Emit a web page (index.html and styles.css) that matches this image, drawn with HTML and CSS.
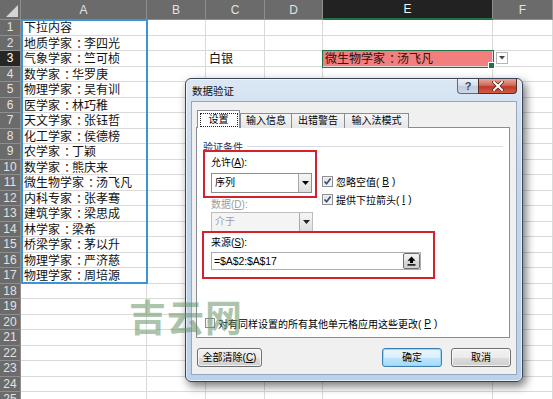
FILE: index.html
```html
<!DOCTYPE html>
<html lang="zh-CN">
<head>
<meta charset="utf-8">
<title>数据验证</title>
<link rel="stylesheet" href="styles.css">
</head>
<body>
<div class="sheet">
  <div class="ch corner"></div><div class="ch">A</div><div class="ch">B</div><div class="ch">C</div><div class="ch">D</div><div class="ch sel">E</div><div class="ch">F</div>
  <div class="rh">1</div><div class="c">下拉内容</div><div class="c"></div><div class="c"></div><div class="c"></div><div class="c"></div><div class="c"></div>
  <div class="rh">2</div><div class="c">地质学家<span class="p">：</span>李四光</div><div class="c"></div><div class="c"></div><div class="c"></div><div class="c"></div><div class="c"></div>
  <div class="rh sel">3</div><div class="c">气象学家<span class="p">：</span>竺可桢</div><div class="c"></div><div class="c">白银</div><div class="c"></div><div class="c active">微生物学家<span class="p">：</span>汤飞凡</div><div class="c"></div>
  <div class="rh">4</div><div class="c">数学家<span class="p">：</span>华罗庚</div><div class="c"></div><div class="c"></div><div class="c"></div><div class="c"></div><div class="c"></div>
  <div class="rh">5</div><div class="c">物理学家<span class="p">：</span>吴有训</div><div class="c"></div><div class="c"></div><div class="c"></div><div class="c"></div><div class="c"></div>
  <div class="rh">6</div><div class="c">医学家<span class="p">：</span>林巧稚</div><div class="c"></div><div class="c"></div><div class="c"></div><div class="c"></div><div class="c"></div>
  <div class="rh">7</div><div class="c">天文学家<span class="p">：</span>张钰哲</div><div class="c"></div><div class="c"></div><div class="c"></div><div class="c"></div><div class="c"></div>
  <div class="rh">8</div><div class="c">化工学家<span class="p">：</span>侯德榜</div><div class="c"></div><div class="c"></div><div class="c"></div><div class="c"></div><div class="c"></div>
  <div class="rh">9</div><div class="c">农学家<span class="p">：</span>丁颖</div><div class="c"></div><div class="c"></div><div class="c"></div><div class="c"></div><div class="c"></div>
  <div class="rh">10</div><div class="c">数学家<span class="p">：</span>熊庆来</div><div class="c"></div><div class="c"></div><div class="c"></div><div class="c"></div><div class="c"></div>
  <div class="rh">11</div><div class="c">微生物学家<span class="p">：</span>汤飞凡</div><div class="c"></div><div class="c"></div><div class="c"></div><div class="c"></div><div class="c"></div>
  <div class="rh">12</div><div class="c">内科专家<span class="p">：</span>张孝骞</div><div class="c"></div><div class="c"></div><div class="c"></div><div class="c"></div><div class="c"></div>
  <div class="rh">13</div><div class="c">建筑学家<span class="p">：</span>梁思成</div><div class="c"></div><div class="c"></div><div class="c"></div><div class="c"></div><div class="c"></div>
  <div class="rh">14</div><div class="c">林学家<span class="p">：</span>梁希</div><div class="c"></div><div class="c"></div><div class="c"></div><div class="c"></div><div class="c"></div>
  <div class="rh">15</div><div class="c">桥梁学家<span class="p">：</span>茅以升</div><div class="c"></div><div class="c"></div><div class="c"></div><div class="c"></div><div class="c"></div>
  <div class="rh">16</div><div class="c">物理学家<span class="p">：</span>严济慈</div><div class="c"></div><div class="c"></div><div class="c"></div><div class="c"></div><div class="c"></div>
  <div class="rh">17</div><div class="c">物理学家<span class="p">：</span>周培源</div><div class="c"></div><div class="c"></div><div class="c"></div><div class="c"></div><div class="c"></div>
  <div class="rh">18</div><div class="c"></div><div class="c"></div><div class="c"></div><div class="c"></div><div class="c"></div><div class="c"></div>
  <div class="rh">19</div><div class="c"></div><div class="c"></div><div class="c"></div><div class="c"></div><div class="c"></div><div class="c"></div>
  <div class="rh">20</div><div class="c"></div><div class="c"></div><div class="c"></div><div class="c"></div><div class="c"></div><div class="c"></div>
  <div class="rh">21</div><div class="c"></div><div class="c"></div><div class="c"></div><div class="c"></div><div class="c"></div><div class="c"></div>
  <div class="rh">22</div><div class="c"></div><div class="c"></div><div class="c"></div><div class="c"></div><div class="c"></div><div class="c"></div>
  <div class="rh">23</div><div class="c"></div><div class="c"></div><div class="c"></div><div class="c"></div><div class="c"></div><div class="c"></div>
  <div class="rh">24</div><div class="c"></div><div class="c"></div><div class="c"></div><div class="c"></div><div class="c"></div><div class="c"></div>
  <div class="rh">25</div><div class="c"></div><div class="c"></div><div class="c"></div><div class="c"></div><div class="c"></div><div class="c"></div>
</div>

<div class="range-sel"></div>
<div class="cell-drop"><svg width="6" height="4" viewBox="0 0 6 4"><polygon points="0,0 6,0 3,3.5" fill="#444"/></svg></div>

<div class="dialog">
  <div class="titlebar">
    <span class="title">数据验证</span>
    <div class="caption-btns">
      <div class="cap-help">?</div>
      <div class="cap-close">
        <svg width="12" height="10" viewBox="0 0 12 10">
          <path d="M2 1 L10 9 M10 1 L2 9" stroke="#5a1a14" stroke-width="3.4" stroke-linecap="square"/>
          <path d="M2 1 L10 9 M10 1 L2 9" stroke="#fff" stroke-width="2" stroke-linecap="square"/>
        </svg>
      </div>
    </div>
  </div>
  <div class="client">
    <div class="tabs">
      <div class="tab active"><span class="focus">设置</span></div>
      <div class="tab t2">输入信息</div>
      <div class="tab t3">出错警告</div>
      <div class="tab t4">输入法模式</div>
    </div>
    <div class="pane">
      <div class="group-title"><span>验证条件</span><i class="rule"></i></div>
      <div class="cond">
        <div class="cond-left">
          <div class="redbox box1">
            <div class="lbl">允许(<u>A</u>):</div>
            <div class="combo"><span class="combo-text">序列</span><span class="drop"><svg width="7" height="4" viewBox="0 0 7 4"><polygon points="0,0 7,0 3.5,4" fill="#000"/></svg></span></div>
          </div>
          <div class="lbl dis indent">数据(<u>D</u>):</div>
          <div class="combo disabled indent"><span class="combo-text">介于</span><span class="drop"><svg width="7" height="4" viewBox="0 0 7 4"><polygon points="0,0 7,0 3.5,4" fill="#222"/></svg></span></div>
        </div>
        <div class="checks">
          <div class="chk"><span class="box"><svg width="9" height="9" viewBox="0 0 9 9"><path d="M1.5 4.5 L3.6 6.8 L7.6 1.6" stroke="#3b4d78" stroke-width="1.7" fill="none"/></svg></span>忽略空值(<u>B</u>)</div>
          <div class="chk"><span class="box"><svg width="9" height="9" viewBox="0 0 9 9"><path d="M1.5 4.5 L3.6 6.8 L7.6 1.6" stroke="#3b4d78" stroke-width="1.7" fill="none"/></svg></span>提供下拉箭头(<u>I</u>)</div>
        </div>
      </div>
      <div class="redbox box2">
        <div class="lbl">来源(<u>S</u>):</div>
        <div class="input">
          <span class="input-text">=$A$2:$A$17</span>
          <span class="refbtn"><svg width="9" height="10" viewBox="0 0 9 10"><polygon points="4.5,0.5 8.5,4.8 6,4.8 6,7 3,7 3,4.8 0.5,4.8" fill="#000"/><rect x="0.5" y="8.2" width="8" height="1.4" fill="#000"/></svg></span>
        </div>
      </div>
      <div class="chk apply"><span class="box"></span>对有同样设置的所有其他单元格应用这些更改(<u>P</u>)</div>
    </div>
    <div class="buttons">
      <div class="btn clear">全部清除(<u>C</u>)</div>
      <div class="btn default">确定</div>
      <div class="btn">取消</div>
    </div>
  </div>
</div>

<div class="watermark">吉云网</div>
</body>
</html>
```

FILE: styles.css
```css
* { box-sizing: border-box; margin: 0; padding: 0; }
html, body { width: 553px; height: 399px; overflow: hidden; background: #fff; }
body {
  position: relative;
  font-family: "Noto Sans CJK SC", "Liberation Sans", sans-serif;
  color: #000;
}

/* ---------- spreadsheet ---------- */
.sheet {
  display: grid;
  grid-template-columns: 21px 126px 59px 59px 58px 170px 1fr;
  grid-template-rows: 20px;
  grid-auto-rows: 15.5px;
  font-size: 12px;
}
.ch, .rh {
  background: #6b6b6b;
  color: #e2e2e2;
  font-family: "Liberation Sans", sans-serif;
  font-size: 12px;
  display: flex;
  align-items: center;
  justify-content: center;
  border-right: 1px solid #8e8e8e;
  border-bottom: 1px solid #8e8e8e;
}
.ch.sel { background: #222; color: #f4f4f4; border-bottom: 2px solid #217346; }
.rh.sel { background: #262626; color: #fff; }
.corner { position: relative; }
.corner::after {
  content: "";
  position: absolute;
  right: 2px; bottom: 2px;
  width: 12px; height: 12px;
  background: #d4d4d4;
  clip-path: polygon(100% 0, 100% 100%, 0 100%);
}
.c {
  border-right: 1px solid #dadada;
  border-bottom: 1px solid #dadada;
  padding-left: 3px;
  line-height: 14.5px;
  white-space: nowrap;
  color: #111;
  min-width: 0;
}
/* full-width colon drawn centred in its 1em cell, as in the reference */
.p {
  padding-left: 4px;
  letter-spacing: -4px;
}
.c.active {
  position: relative;
  background: #f37e7e;
  padding-left: 2px;
  outline: 1px solid #217346;
  color: #2a1010;
}
.c.active::after {
  content: "";
  position: absolute;
  right: -3px; bottom: -3px;
  width: 5px; height: 5px;
  background: #217346;
  border: 1px solid #fff;
}
.range-sel {
  position: absolute;
  left: 21px; top: 19px;
  width: 127px; height: 265px;
  border: 2px solid #3b94d6;
}
.cell-drop {
  position: absolute;
  left: 496px; top: 52px;
  width: 12px; height: 12px;
  background: #fff;
  border: 1px solid #b5b5b5;
  display: flex;
  align-items: center;
  justify-content: center;
}

/* ---------- dialog ---------- */
.dialog {
  position: absolute;
  left: 185px; top: 78px;
  width: 338px; height: 304px;
  border: 1px solid #3a4656;
  border-radius: 6px;
  padding: 0 5px 6px 5px;
  background: linear-gradient(#dbe7f4, #c4d7ec 30%, #bcd2ea);
  box-shadow: 3px 4px 10px rgba(0, 0, 0, 0.55), inset 0 0 0 1px rgba(255,255,255,0.6);
  display: flex;
  flex-direction: column;
  font-family: "Liberation Sans", "Noto Sans CJK SC", sans-serif;
  font-size: 10px;
}
.titlebar {
  height: 22px;
  display: flex;
  align-items: center;
  padding-left: 1px;
}
.title { font-size: 10.5px; color: #111; }
.caption-btns {
  margin-left: auto;
  align-self: flex-start;
  display: flex;
  height: 15px;
}
.cap-help {
  width: 21px;
  border: 1px solid #5d6a7c;
  border-top: none;
  border-right: none;
  border-radius: 0 0 0 4px;
  background: linear-gradient(#edf2f8, #d3dce8 50%, #c1cddc 51%, #cdd8e6);
  color: #3b4a5e;
  font-family: "Liberation Sans", sans-serif;
  font-weight: bold;
  font-size: 11px;
  line-height: 14px;
  text-align: center;
}
.cap-close {
  width: 39px;
  border: 1px solid #5a2a24;
  border-top: none;
  border-radius: 0 0 4px 0;
  background: linear-gradient(#e8a89c, #d0695a 45%, #bf3b2b 55%, #d45a40);
  display: flex;
  align-items: center;
  justify-content: center;
}
.client {
  flex: 1;
  background: #f0f0f0;
  border: 1px solid #95a8c0;
  padding: 8px 6px 7px 4px;
  display: flex;
  flex-direction: column;
}

/* tabs */
.tabs {
  display: flex;
  align-items: flex-end;
  height: 18px;
  padding-left: 1px;
  position: relative;
  z-index: 1;
  margin-bottom: -1px;
}
.tab {
  height: 15px;
  border: 1px solid #898c95;
  border-bottom: none;
  background: linear-gradient(#f5f5f5, #e6e6e6);
  display: flex;
  align-items: center;
  justify-content: center;
  margin-left: -1px;
  line-height: 12px;
}
.tab.active {
  height: 18px;
  width: 43px;
  margin-left: 0;
  background: #fff;
  z-index: 2;
}
.tab.t2 { width: 52px; margin-left: 0; }
.tab.t3 { width: 54px; }
.tab.t4 { width: 65px; }
.focus {
  width: 38px;
  height: 14px;
  border: 1px dotted #222;
  display: flex;
  align-items: center;
  justify-content: center;
}

.pane {
  height: 211px;
  background: #fff;
  border: 1px solid #898c95;
  display: flex;
  flex-direction: column;
  padding-bottom: 7px;
}
.group-title {
  display: flex;
  align-items: center;
  gap: 4px;
  margin: 11px 6px 0 6px;
  height: 14px;
  color: #1a2f5a;
}
.rule { flex: 1; height: 1px; background: #d8dde3; }

.cond {
  display: flex;
  margin-top: -3px;
  margin-left: 6px;
}
.cond-left { width: 114px; display: flex; flex-direction: column; }
.redbox {
  border: 2px solid #d3222b;
  display: flex;
  flex-direction: column;
  position: relative;
}
.box1 { width: 114px; height: 48px; padding: 4px 3px 3px 6px; gap: 3px; }
.lbl { line-height: 14px; height: 14px; }
.lbl.dis { color: #9c9c9c; height: 13px; line-height: 13px; }
.indent { margin-left: 8px; }
.combo {
  height: 20px;
  border: 1px solid #8f8f8f;
  background: #fff;
  display: flex;
  align-items: stretch;
}
.box1 .combo { width: 101px; }
.combo.disabled {
  width: 102px;
  margin-top: 1px;
  background: #f4f4f4;
  border-color: #bdbdbd;
  color: #9d9d9d;
}
.combo-text { flex: 1; padding-left: 3px; line-height: 18px; }
.drop {
  width: 13px;
  border-left: 1px solid #a9a9a9;
  background: linear-gradient(#f6f6f6, #dedede);
  display: flex;
  align-items: center;
  justify-content: center;
}
.checks {
  margin-top: 22px;
  margin-left: 5px;
  display: flex;
  flex-direction: column;
}
.chk {
  height: 18px;
  display: flex;
  align-items: center;
  gap: 3px;
  white-space: nowrap;
}
.box {
  width: 11px;
  height: 11px;
  border: 1px solid #8e8f8f;
  background: linear-gradient(135deg, #dcdcdc, #fbfbfb);
  box-shadow: inset 0 0 0 1px #f4f4f4;
  display: flex;
  align-items: center;
  justify-content: center;
}
.box2 {
  width: 233px;
  height: 48px;
  margin-top: -1px;
  margin-left: 5px;
  padding: 3px 12px 7px 7px;
  gap: 2px;
}
.input {
  height: 18px;
  border: 1px solid #abadb3;
  background: #fff;
  display: flex;
  align-items: center;
  padding: 0 0 0 2px;
}
.input-text {
  flex: 1;
  font-family: "Liberation Sans", sans-serif;
  font-size: 10.5px;
  letter-spacing: -0.1px;
}
.refbtn {
  width: 17px;
  height: 16px;
  border: 1px solid #707070;
  border-radius: 2px;
  background: linear-gradient(#f3f3f3, #e6e6e6 50%, #d8d8d8 51%, #d2d2d2);
  display: flex;
  align-items: center;
  justify-content: center;
}
.apply {
  height: 14px;
  margin-top: 37px;
  margin-left: 8px;
  gap: 3px;
}
.apply .box { width: 10px; height: 10px; }

/* buttons */
.buttons {
  display: flex;
  gap: 9px;
  margin-top: 10px;
  margin-right: -1px;
  margin-left: 1px;
  height: 19px;
}
.btn {
  width: 60px;
  height: 19px;
  border: 1px solid #707070;
  border-radius: 3px;
  background: linear-gradient(#f2f2f2, #ebebeb 50%, #dddddd 51%, #cfcfcf);
  box-shadow: inset 0 0 0 1px rgba(255,255,255,0.7);
  display: flex;
  align-items: center;
  justify-content: center;
  line-height: 12px;
}
.btn.clear { width: 65px; margin-right: auto; }
.btn.default {
  border-color: #3c7fb1;
  box-shadow: inset 0 0 0 1px #9ad6f5;
  background: linear-gradient(#eaf6fd, #d9f0fc 50%, #bee6fd 51%, #a7d9f5);
}

/* watermark */
.watermark {
  position: absolute;
  left: 129px;
  top: 294px;
  font-size: 37px;
  font-weight: 700;
  line-height: 44px;
  letter-spacing: 1px;
  color: rgba(100, 145, 100, 0.55);
  z-index: 5;
  white-space: nowrap;
}
```
